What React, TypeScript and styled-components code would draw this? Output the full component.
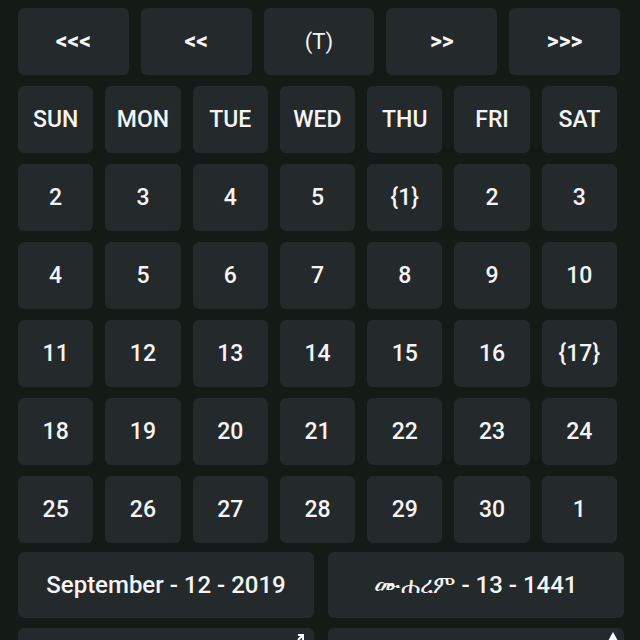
import React from "react";
import styled, { createGlobalStyle } from "styled-components";

const Global = createGlobalStyle`
  html, body {
    margin: 0;
    padding: 0;
    background: #141a15;
    height: 640px;
    overflow: hidden;
  }
  * { box-sizing: border-box; }
`;

const Page = styled.div`
  display: flex;
  flex-direction: column;
  gap: 11px;
  padding: 8px 20px 0 18px;
  width: 640px;
  height: 640px;
  overflow: hidden;
  background: #141a15;
  font-family: Roboto, "DejaVu Sans", "Noto Sans", sans-serif;
`;

const NavRow = styled.div`
  display: grid;
  grid-template-columns: repeat(5, 1fr);
  gap: 12px;
`;

const Grid = styled.div`
  display: grid;
  grid-template-columns: repeat(7, 1fr);
  column-gap: 12px;
  row-gap: 11px;
  margin-right: 3px;
`;

const Key = styled.div<{ $h?: number; $size?: number; $weight?: number }>`
  position: relative;
  display: flex;
  align-items: center;
  justify-content: center;
  height: ${(p) => p.$h ?? 67}px;
  background: #24292b;
  border-radius: 6px;
  color: #f4f4f4;
  font-size: ${(p) => p.$size ?? 23}px;
  font-weight: ${(p) => p.$weight ?? 500};
  white-space: nowrap;
`;

const BottomRow = styled.div<{ $top?: number }>`
  display: grid;
  grid-template-columns: 1fr 1fr;
  gap: 14px;
  margin-top: ${(p) => p.$top ?? 0}px;
  margin-right: -4px;
`;

const CornerIcon = styled.svg<{ $right: number }>`
  position: absolute;
  top: 3px;
  right: ${(p) => p.$right}px;
  width: 10px;
  height: 10px;
`;

const nav = ["<<<", "<<", "(T)", ">>", ">>>"];
const days = ["SUN", "MON", "TUE", "WED", "THU", "FRI", "SAT"];
const dates = [
  "2", "3", "4", "5", "{1}", "2", "3",
  "4", "5", "6", "7", "8", "9", "10",
  "11", "12", "13", "14", "15", "16", "{17}",
  "18", "19", "20", "21", "22", "23", "24",
  "25", "26", "27", "28", "29", "30", "1",
];

export default function App() {
  return (
    <>
      <Global />
      <Page>
        <NavRow>
          {nav.map((n, i) => (
            <Key key={i} $size={n === "(T)" ? 22 : 23} $weight={n === "(T)" ? 400 : 700}>
              {n}
            </Key>
          ))}
        </NavRow>
        <Grid>
          {days.map((d) => (
            <Key key={d}>{d}</Key>
          ))}
          {dates.map((d, i) => (
            <Key key={i}>{d}</Key>
          ))}
        </Grid>
        <BottomRow $top={-2}>
          <Key $h={66} $size={24} $weight={500}>September - 12 - 2019</Key>
          <Key $h={66} $size={24} $weight={500}>ሙሐረም - 13 - 1441</Key>
        </BottomRow>
        <BottomRow $top={-1}>
          <Key $h={60}>
            <CornerIcon $right={8} viewBox="0 0 10 10">
              <path d="M2 4 H7 V9 M7 4 L2 9" stroke="#fff" strokeWidth="2" fill="none" />
            </CornerIcon>
          </Key>
          <Key $h={60}>
            <CornerIcon $right={6} viewBox="0 0 10 10">
              <path d="M5 1 L10 10 H0 Z" fill="#fff" />
            </CornerIcon>
          </Key>
        </BottomRow>
      </Page>
    </>
  );
}
